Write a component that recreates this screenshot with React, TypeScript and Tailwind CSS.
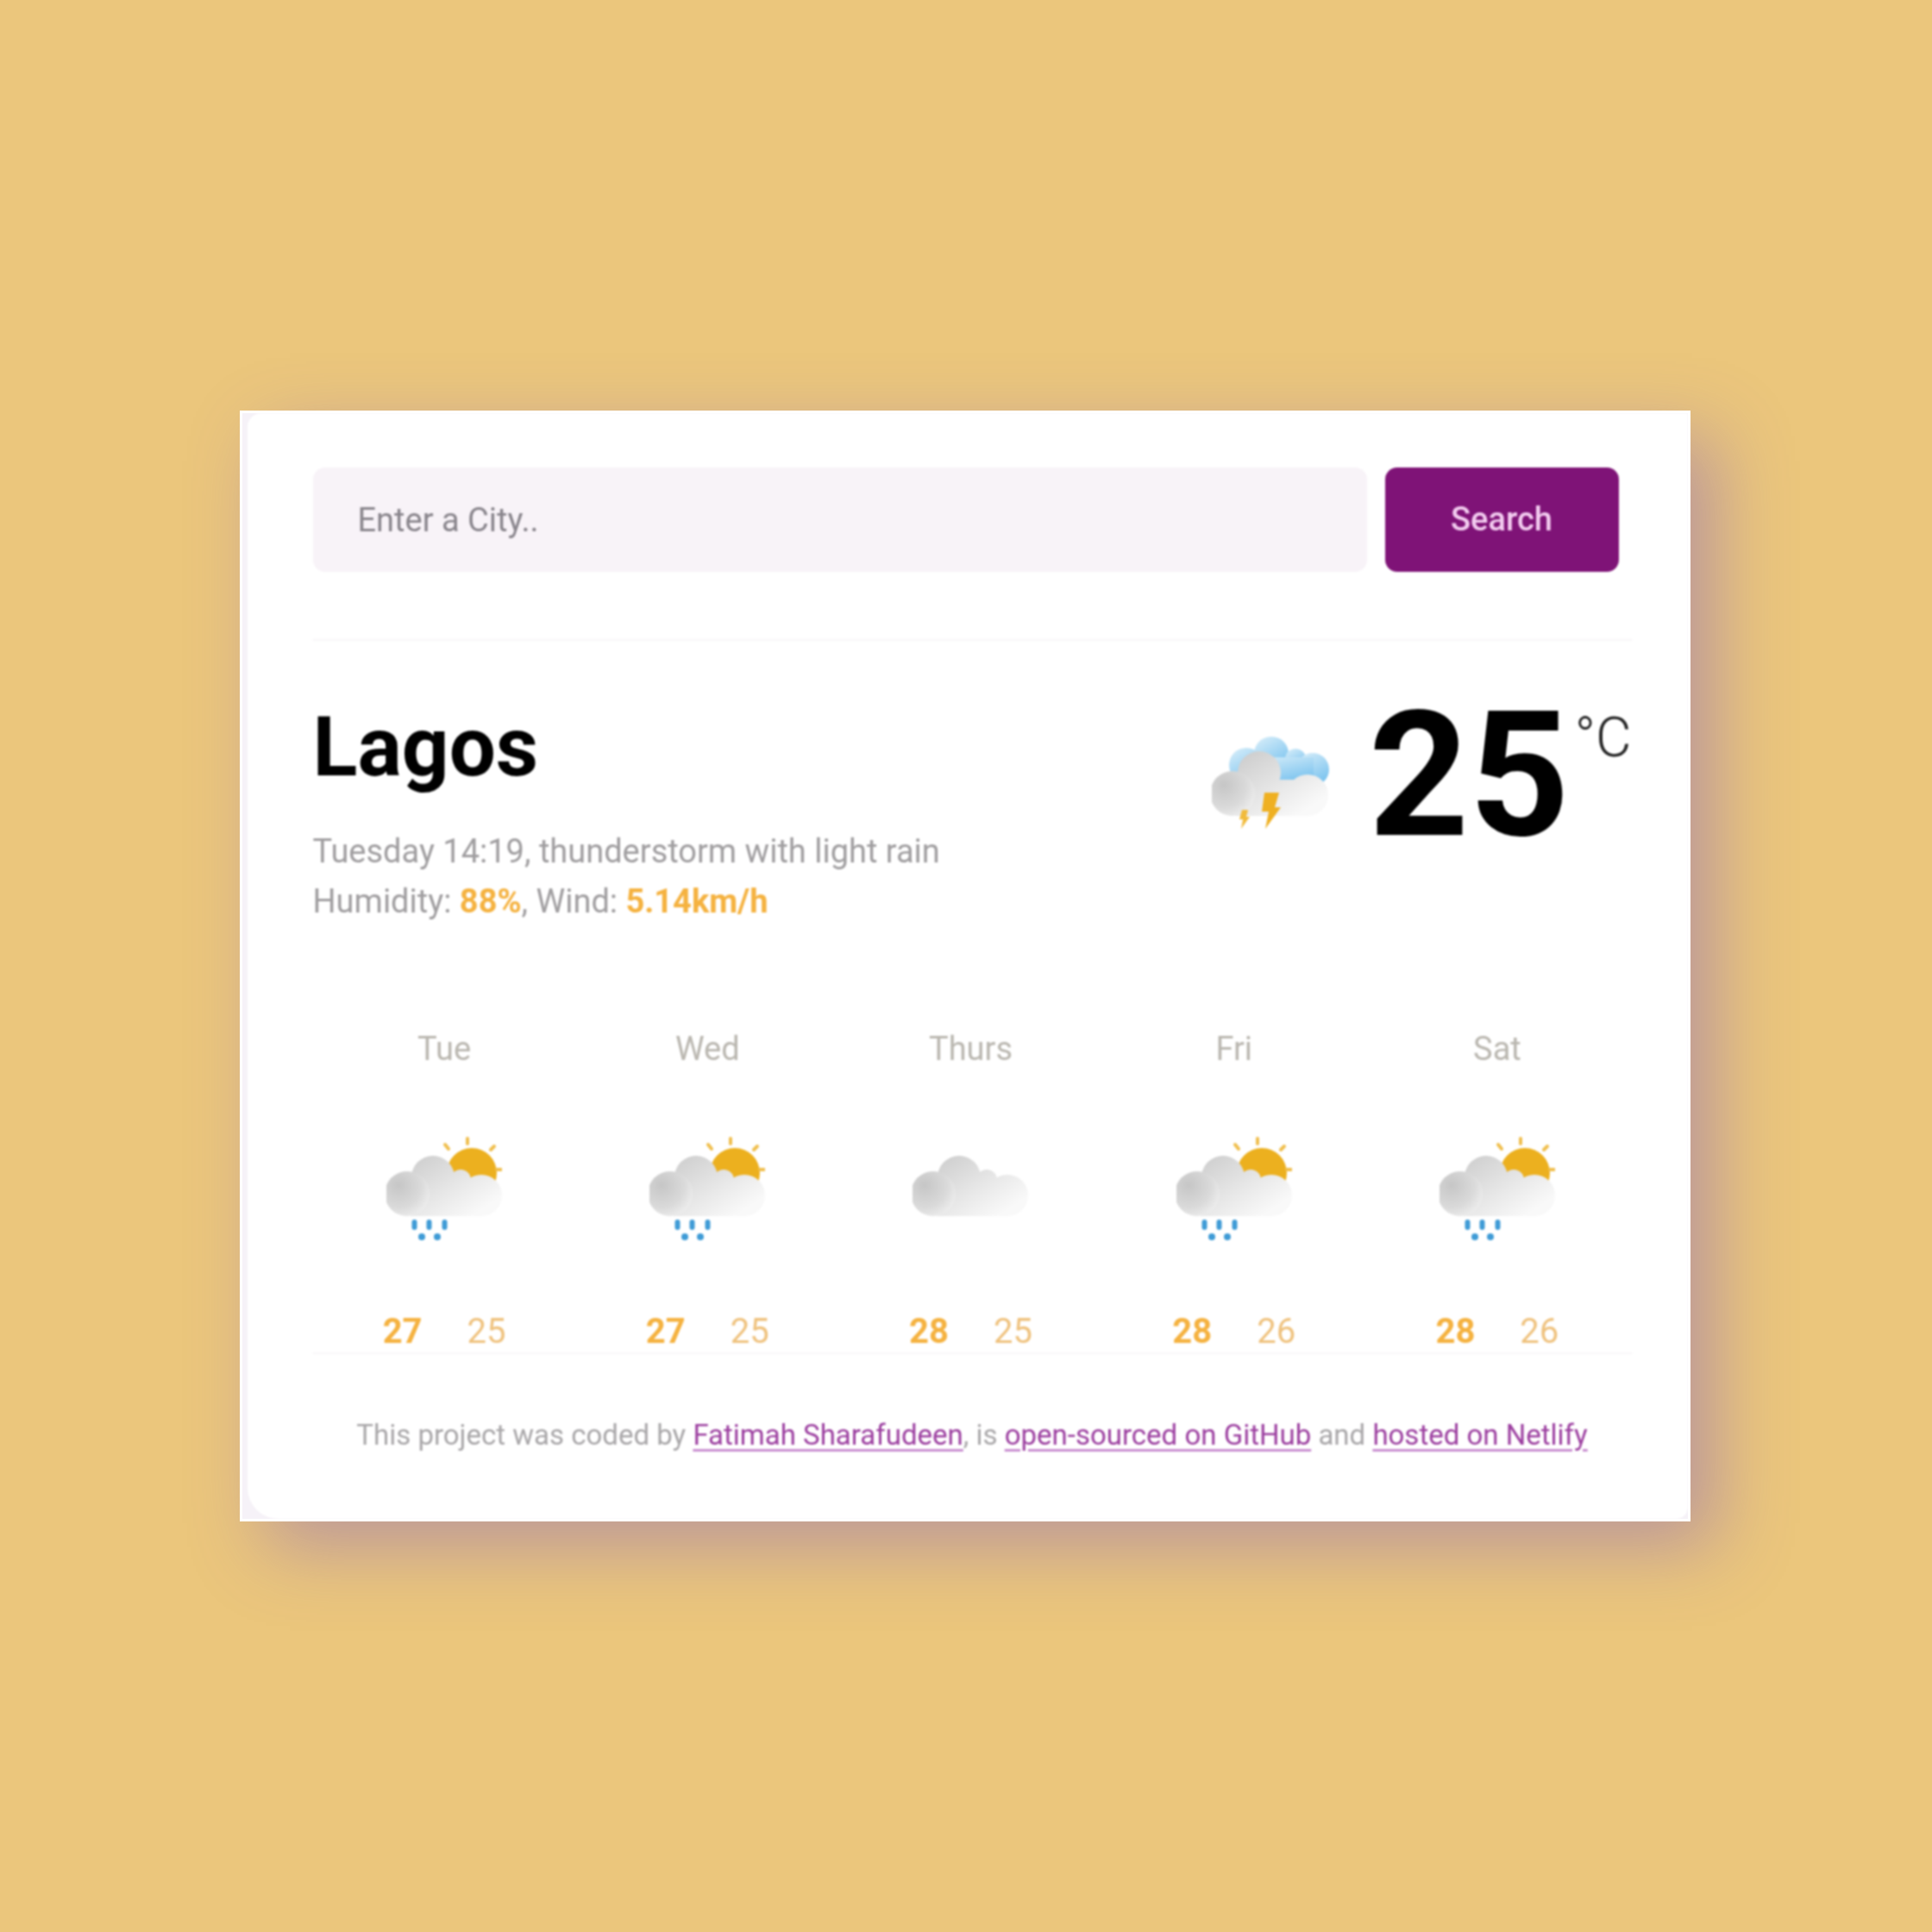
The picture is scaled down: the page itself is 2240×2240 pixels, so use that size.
function CloudBody({ id, blue }: { id: string; blue?: boolean }) {
  return (
    <g>
      <defs>
        <linearGradient id={id} gradientUnits="userSpaceOnUse" x1="40" y1="22" x2="90" y2="98">
          <stop offset="0" stopColor="#cfcfcf" />
          <stop offset="0.6" stopColor="#e9e9e9" />
          <stop offset="1" stopColor="#f9f9f9" />
        </linearGradient>
        <radialGradient id={id + "-left"} gradientUnits="userSpaceOnUse" cx="14" cy="56" r="44">
          <stop offset="0" stopColor="#c6c6c6" />
          <stop offset="0.6" stopColor="#dadada" />
          <stop offset="1" stopColor="#f2f2f2" />
        </radialGradient>
      </defs>
      <g fill={`url(#${id})`}>
        <circle cx={blue ? 55 : 54} cy={blue ? 42 : 47} r="25" />
        {!blue && <circle cx="86" cy="50" r="12" />}
        <circle cx={blue ? 111 : 110} cy="68" r="24" />
        <rect x="28" y="54" width="84" height="38" />
        <rect x="60" y="50" width="40" height="20" />
      </g>
      <circle cx="24" cy="66" r="26" fill={`url(#${id}-left)`} />
    </g>
  );
}

function Sun() {
  return (
    <g>
      <circle cx="99" cy="42" r="29" fill="#ecb01f" />
      <g stroke="#f0bf4e" strokeWidth="4" strokeLinecap="round">
        <line x1="94" y1="2" x2="94" y2="8" />
        <line x1="68" y1="9" x2="72" y2="14" />
        <line x1="125" y1="11" x2="121" y2="15" />
        <line x1="128" y1="38" x2="133" y2="38" />
      </g>
    </g>
  );
}

function Rain() {
  return (
    <g fill="#3f9bd6">
      <rect x="29.5" y="96" width="6" height="12" rx="3" />
      <rect x="46.5" y="96" width="6" height="12" rx="3" />
      <rect x="64.5" y="96" width="6" height="12" rx="3" />
      <circle cx="41" cy="116" r="4" />
      <circle cx="59" cy="116" r="4" />
    </g>
  );
}

function RainSunIcon({ id }: { id: string }) {
  return (
    <svg width="134" height="122" viewBox="0 0 134 122">
      <Sun />
      <CloudBody id={id} />
      <Rain />
    </svg>
  );
}

function CloudIcon({ id }: { id: string }) {
  return (
    <svg width="134" height="122" viewBox="0 0 134 122">
      <CloudBody id={id} />
    </svg>
  );
}

function ThunderIcon() {
  return (
    <svg width="136" height="108" viewBox="0 0 136 108">
      <defs>
        <linearGradient id="sky" x1="0.2" y1="0" x2="0.8" y2="1">
          <stop offset="0" stopColor="#d4ecf9" />
          <stop offset="1" stopColor="#74c0ee" />
        </linearGradient>
      </defs>
      <g fill="url(#sky)">
        <circle cx="69" cy="20" r="20" />
        <circle cx="97" cy="26" r="12" />
        <circle cx="117" cy="38" r="19" />
        <circle cx="40" cy="33" r="20" />
        <rect x="40" y="24" width="78" height="30" />
      </g>
      <CloudBody id="storm" blue />
      <path d="M61 65h17l-5 17h7L62 107l4-20h-8z" fill="#efb021" />
      <path d="M35 85h7l-2 8h4l-10 14 2-11h-4z" fill="#f1bb3c" />
    </svg>
  );
}

const days = [
  { name: "Tue", high: 27, low: 25 },
  { name: "Wed", high: 27, low: 25 },
  { name: "Thurs", high: 28, low: 25, cloud: true },
  { name: "Fri", high: 28, low: 26 },
  { name: "Sat", high: 28, low: 26 },
];

const linkClass = "text-[#9c3fa0] underline decoration-[#c98ed0] decoration-[3px] underline-offset-[5px]";

export default function App() {
  return (
    <div className="min-h-[2240px] bg-[#ebc67c] flex items-center justify-center font-['Roboto',sans-serif]">
      <div className="w-[1682px] h-[1288px] mr-[3px] bg-[#f6f2f8] border-[3px] border-white shadow-[30px_30px_80px_rgba(120,85,195,0.42)] pl-[6px]">
        <div className="h-full bg-white rounded-tl-[16px] rounded-bl-[36px] rounded-br-[14px] pl-[76px] pr-[65px] pt-[63px] blur-[0.8px]">
          <form className="flex gap-[21px] pr-[15px]">
            <input
              placeholder="Enter a City.."
              className="flex-1 h-[121px] rounded-[14px] bg-[#f8f3f8] px-[52px] text-[38px] placeholder:text-[#89858c]"
            />
            <button className="w-[271px] h-[121px] rounded-[14px] bg-[#7f1377] text-[38px] font-medium text-[#f3cdf0]">
              Search
            </button>
          </form>

          <div className="mt-[78px] border-t-[2px] border-[#f8f6f8]" />

          <div className="flex justify-between mt-[60px] h-[330px]">
            <div className="pt-[7px]">
              <h1 className="text-[96px] font-bold text-black leading-[112px]">Lagos</h1>
              <p className="mt-[36px] text-[38px] leading-[58px] text-[#a09ea0]">
                Tuesday 14:19, thunderstorm with light rain
                <br />
                Humidity: <span className="font-bold text-[#f5b240]">88%</span>, Wind:{" "}
                <span className="font-bold text-[#f5b240]">5.14km/h</span>
              </p>
            </div>
            <div className="flex items-start">
              <div className="mt-[51px] mr-[46px]">
                <ThunderIcon />
              </div>
              <span className="-mt-[27px] text-[203px] font-bold leading-[246px] text-black">25</span>
              <span className="mt-[18px] ml-[6px] text-[64px] leading-[70px] font-light text-[#222]">°C</span>
            </div>
          </div>

          <div className="grid grid-cols-5 mt-[62px] pr-[3px]">
            {days.map((day, i) => (
              <div key={i} className="flex flex-col items-center">
                <div className="text-[38px] leading-[42px] text-[#bab7b0]">{day.name}</div>
                <div className="mt-[81px] h-[122px]">
                  {day.cloud ? <CloudIcon id={"c" + i} /> : <RainSunIcon id={"c" + i} />}
                </div>
                <div className="mt-[81px] flex gap-[52px] text-[40px] leading-[46px]">
                  <span className="font-bold text-[#f5b240]">{day.high}</span>
                  <span className="text-[#efc27e]">{day.low}</span>
                </div>
              </div>
            ))}
          </div>

          <div className="mt-[1px] border-t-[2px] border-[#f8f6f8]" />

          <p className="mt-[75px] text-center text-[33px] leading-[38px] text-[#a9a7a9]">
            This project was coded by <a className={linkClass}>Fatimah Sharafudeen</a>, is{" "}
            <a className={linkClass}>open-sourced on GitHub</a> and <a className={linkClass}>hosted on Netlify</a>
          </p>
        </div>
      </div>
    </div>
  );
}
